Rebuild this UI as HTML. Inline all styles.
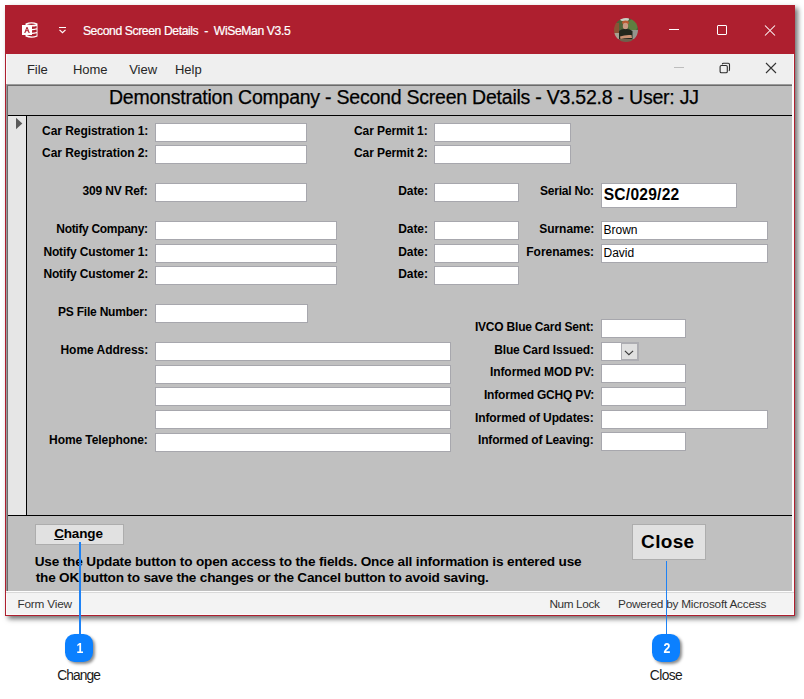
<!DOCTYPE html>
<html><head><meta charset="utf-8"><style>
html,body{margin:0;padding:0;}
body{width:804px;height:699px;background:#fff;position:relative;overflow:hidden;font-family:"Liberation Sans",sans-serif;}
.t{position:absolute;white-space:pre;}
.b{position:absolute;}
</style></head><body>
<div class="b" style="left:5px;top:5px;width:790px;height:611px;background:#ae1f2f;box-shadow:3px 3px 5px rgba(0,0,0,0.55);"></div>
<div class="b" style="left:6px;top:54px;width:788px;height:561px;background:#fbfbfb;"></div>
<div class="b" style="left:7px;top:54px;width:786px;height:30px;background:#efefef;"></div>
<div class="b" style="left:7px;top:591px;width:786px;height:23px;background:#f3f3f3;"></div>
<div class="b" style="left:6px;top:591px;width:788px;height:1px;background:#fdfdfd;"></div>
<div class="b" style="left:6px;top:592px;width:788px;height:1px;background:#d9d9d9;"></div>
<div class="b" style="left:6px;top:84px;width:786px;height:507px;background:#c0c0c0;"></div>
<div class="b" style="left:6px;top:84px;width:786px;height:1px;background:#9a9a9a;"></div>
<div class="b" style="left:6px;top:85px;width:786px;height:1px;background:#6a6a6a;"></div>
<div class="b" style="left:6px;top:84px;width:1px;height:507px;background:#9a9a9a;"></div>
<div class="b" style="left:7px;top:85px;width:1px;height:506px;background:#6a6a6a;"></div>
<div class="b" style="left:8px;top:115px;width:784px;height:1px;background:#000;"></div>
<div class="b" style="left:8px;top:116px;width:18px;height:399px;background:#e6e6e6;"></div>
<div class="b" style="left:26px;top:116px;width:1px;height:399px;background:#000;"></div>
<svg class="b" style="left:14px;top:117px" width="10" height="14"><path d="M2 0.8 L8.3 6.5 L2 12.2 Z" fill="#5a5a5a"/></svg>
<div class="b" style="left:8px;top:515px;width:784px;height:1px;background:#000;"></div>
<div class="t" style="left:82.9px;top:24.67px;font-size:12.2px;line-height:12.2px;font-weight:400;color:#fff;letter-spacing:-0.408px;-webkit-text-stroke:0.2px #fff;">Second Screen Details&nbsp; -&nbsp; WiSeMan V3.5</div>
<div class="t" style="left:26.9px;top:63.40px;font-size:13px;line-height:13px;font-weight:400;color:#262626;letter-spacing:0px;">File</div>
<div class="t" style="left:72.9px;top:63.40px;font-size:13px;line-height:13px;font-weight:400;color:#262626;letter-spacing:0px;">Home</div>
<div class="t" style="left:129.2px;top:63.40px;font-size:13px;line-height:13px;font-weight:400;color:#262626;letter-spacing:0px;">View</div>
<div class="t" style="left:174.89999999999998px;top:63.40px;font-size:13px;line-height:13px;font-weight:400;color:#262626;letter-spacing:0px;">Help</div>
<div class="t" style="left:109.0px;top:88.19px;font-size:19.5px;line-height:19.5px;font-weight:400;color:#000;letter-spacing:-0.228px;-webkit-text-stroke:0.25px #000;">Demonstration Company - Second Screen Details - V3.52.8 - User: JJ</div>
<div class="t" style="left:42.1px;top:124.84px;font-size:12px;line-height:12px;font-weight:700;color:#000;letter-spacing:-0.061px;">Car Registration 1:</div>
<div class="t" style="left:42.1px;top:146.84px;font-size:12px;line-height:12px;font-weight:700;color:#000;letter-spacing:-0.061px;">Car Registration 2:</div>
<div class="t" style="left:82.4px;top:184.84px;font-size:12px;line-height:12px;font-weight:700;color:#000;letter-spacing:-0.14px;">309 NV Ref:</div>
<div class="t" style="left:56.3px;top:222.84px;font-size:12px;line-height:12px;font-weight:700;color:#000;letter-spacing:-0.307px;">Notify Company:</div>
<div class="t" style="left:43.4px;top:245.84px;font-size:12px;line-height:12px;font-weight:700;color:#000;letter-spacing:-0.141px;">Notify Customer 1:</div>
<div class="t" style="left:43.4px;top:267.84px;font-size:12px;line-height:12px;font-weight:700;color:#000;letter-spacing:-0.141px;">Notify Customer 2:</div>
<div class="t" style="left:58.0px;top:305.84px;font-size:12px;line-height:12px;font-weight:700;color:#000;letter-spacing:-0.214px;">PS File Number:</div>
<div class="t" style="left:60.5px;top:343.84px;font-size:12px;line-height:12px;font-weight:700;color:#000;letter-spacing:-0.042px;">Home Address:</div>
<div class="t" style="left:49.1px;top:434.34px;font-size:12px;line-height:12px;font-weight:700;color:#000;letter-spacing:-0.079px;">Home Telephone:</div>
<div class="t" style="left:354.0px;top:124.84px;font-size:12px;line-height:12px;font-weight:700;color:#000;letter-spacing:-0.083px;">Car Permit 1:</div>
<div class="t" style="left:354.0px;top:146.84px;font-size:12px;line-height:12px;font-weight:700;color:#000;letter-spacing:-0.083px;">Car Permit 2:</div>
<div class="t" style="left:398.2px;top:184.84px;font-size:12px;line-height:12px;font-weight:700;color:#000;letter-spacing:-0.05px;">Date:</div>
<div class="t" style="left:398.2px;top:222.84px;font-size:12px;line-height:12px;font-weight:700;color:#000;letter-spacing:-0.05px;">Date:</div>
<div class="t" style="left:398.2px;top:245.84px;font-size:12px;line-height:12px;font-weight:700;color:#000;letter-spacing:-0.05px;">Date:</div>
<div class="t" style="left:398.2px;top:267.84px;font-size:12px;line-height:12px;font-weight:700;color:#000;letter-spacing:-0.05px;">Date:</div>
<div class="t" style="left:540.1px;top:184.84px;font-size:12px;line-height:12px;font-weight:700;color:#000;letter-spacing:-0.233px;">Serial No:</div>
<div class="t" style="left:539.2px;top:222.84px;font-size:12px;line-height:12px;font-weight:700;color:#000;letter-spacing:-0.029px;">Surname:</div>
<div class="t" style="left:526.3px;top:245.84px;font-size:12px;line-height:12px;font-weight:700;color:#000;letter-spacing:-0.033px;">Forenames:</div>
<div class="t" style="left:474.9px;top:320.84px;font-size:12px;line-height:12px;font-weight:700;color:#000;letter-spacing:-0.205px;">IVCO Blue Card Sent:</div>
<div class="t" style="left:494.2px;top:343.84px;font-size:12px;line-height:12px;font-weight:700;color:#000;letter-spacing:-0.137px;">Blue Card Issued:</div>
<div class="t" style="left:489.9px;top:365.84px;font-size:12px;line-height:12px;font-weight:700;color:#000;letter-spacing:-0.06px;">Informed MOD PV:</div>
<div class="t" style="left:483.9px;top:389.34px;font-size:12px;line-height:12px;font-weight:700;color:#000;letter-spacing:-0.181px;">Informed GCHQ PV:</div>
<div class="t" style="left:475.0px;top:411.84px;font-size:12px;line-height:12px;font-weight:700;color:#000;letter-spacing:-0.105px;">Informed of Updates:</div>
<div class="t" style="left:478.0px;top:433.84px;font-size:12px;line-height:12px;font-weight:700;color:#000;letter-spacing:-0.158px;">Informed of Leaving:</div>
<div class="b" style="left:155px;top:123px;width:152px;height:19px;background:#fff;box-shadow:inset 0 0 0 1px #a7a7ad;"></div>
<div class="b" style="left:155px;top:145px;width:152px;height:19px;background:#fff;box-shadow:inset 0 0 0 1px #a7a7ad;"></div>
<div class="b" style="left:434px;top:123px;width:137px;height:19px;background:#fff;box-shadow:inset 0 0 0 1px #a7a7ad;"></div>
<div class="b" style="left:434px;top:145px;width:137px;height:19px;background:#fff;box-shadow:inset 0 0 0 1px #a7a7ad;"></div>
<div class="b" style="left:155px;top:183px;width:152px;height:19px;background:#fff;box-shadow:inset 0 0 0 1px #a7a7ad;"></div>
<div class="b" style="left:434px;top:183px;width:85px;height:19px;background:#fff;box-shadow:inset 0 0 0 1px #a7a7ad;"></div>
<div class="b" style="left:601px;top:183px;width:136px;height:25px;background:#fff;box-shadow:inset 0 0 0 1px #a7a7ad;"></div>
<div class="b" style="left:155px;top:221px;width:182px;height:19px;background:#fff;box-shadow:inset 0 0 0 1px #a7a7ad;"></div>
<div class="b" style="left:434px;top:221px;width:85px;height:19px;background:#fff;box-shadow:inset 0 0 0 1px #a7a7ad;"></div>
<div class="b" style="left:601px;top:221px;width:167px;height:19px;background:#fff;box-shadow:inset 0 0 0 1px #a7a7ad;"></div>
<div class="b" style="left:155px;top:244px;width:182px;height:19px;background:#fff;box-shadow:inset 0 0 0 1px #a7a7ad;"></div>
<div class="b" style="left:434px;top:244px;width:85px;height:19px;background:#fff;box-shadow:inset 0 0 0 1px #a7a7ad;"></div>
<div class="b" style="left:601px;top:244px;width:167px;height:19px;background:#fff;box-shadow:inset 0 0 0 1px #a7a7ad;"></div>
<div class="b" style="left:155px;top:266px;width:182px;height:19px;background:#fff;box-shadow:inset 0 0 0 1px #a7a7ad;"></div>
<div class="b" style="left:434px;top:266px;width:85px;height:19px;background:#fff;box-shadow:inset 0 0 0 1px #a7a7ad;"></div>
<div class="b" style="left:155px;top:304px;width:153px;height:19px;background:#fff;box-shadow:inset 0 0 0 1px #a7a7ad;"></div>
<div class="b" style="left:601px;top:319px;width:85px;height:19px;background:#fff;box-shadow:inset 0 0 0 1px #a7a7ad;"></div>
<div class="b" style="left:155px;top:342px;width:296px;height:19px;background:#fff;box-shadow:inset 0 0 0 1px #a7a7ad;"></div>
<div class="b" style="left:155px;top:365px;width:296px;height:19px;background:#fff;box-shadow:inset 0 0 0 1px #a7a7ad;"></div>
<div class="b" style="left:155px;top:387px;width:296px;height:19px;background:#fff;box-shadow:inset 0 0 0 1px #a7a7ad;"></div>
<div class="b" style="left:155px;top:410px;width:296px;height:19px;background:#fff;box-shadow:inset 0 0 0 1px #a7a7ad;"></div>
<div class="b" style="left:155px;top:433px;width:296px;height:19px;background:#fff;box-shadow:inset 0 0 0 1px #a7a7ad;"></div>
<div class="b" style="left:601px;top:364px;width:85px;height:19px;background:#fff;box-shadow:inset 0 0 0 1px #a7a7ad;"></div>
<div class="b" style="left:601px;top:387px;width:85px;height:19px;background:#fff;box-shadow:inset 0 0 0 1px #a7a7ad;"></div>
<div class="b" style="left:601px;top:410px;width:167px;height:19px;background:#fff;box-shadow:inset 0 0 0 1px #a7a7ad;"></div>
<div class="b" style="left:601px;top:432px;width:85px;height:19px;background:#fff;box-shadow:inset 0 0 0 1px #a7a7ad;"></div>
<div class="b" style="left:601px;top:342px;width:22px;height:19px;background:#fff;box-shadow:inset 0 0 0 1px #a7a7ad;"></div>
<div class="b" style="left:621px;top:342px;width:18px;height:19px;background:#e0e0e0;box-shadow:inset 1px 0 0 #adadb2,inset -2px 0 0 #adadb2,inset 0 2px 0 #adadb2,inset 0 -2px 0 #adadb2;"></div>
<svg class="b" style="left:622px;top:347px" width="14" height="10" viewBox="0 0 14 10"><path d="M2.9 3.9 L6.9 7.7 L11.1 3.9" fill="none" stroke="#3a3a3a" stroke-width="1.15"/></svg>
<div class="t" style="left:603.7px;top:186.59px;font-size:15.6px;line-height:15.6px;font-weight:700;color:#000;letter-spacing:0.237px;">SC/029/22</div>
<div class="t" style="left:603.5px;top:223.94px;font-size:12px;line-height:12px;font-weight:400;color:#000;letter-spacing:0px;">Brown</div>
<div class="t" style="left:603.5px;top:246.84px;font-size:12px;line-height:12px;font-weight:400;color:#000;letter-spacing:0px;">David</div>
<div class="b" style="left:35px;top:524px;width:89px;height:21px;background:#e1e1e1;box-shadow:inset 0 0 0 1px #adadad;"></div>
<div class="t" style="left:54.2px;top:526.87px;font-size:13.5px;line-height:13.5px;font-weight:700;color:#000;letter-spacing:-0.16px;"><u>C</u>hange</div>
<div class="b" style="left:632px;top:524px;width:74px;height:36px;background:#e1e1e1;box-shadow:inset 0 0 0 1px #adadad;"></div>
<div class="t" style="left:641.1px;top:532.32px;font-size:19px;line-height:19px;font-weight:700;color:#000;letter-spacing:0.325px;">Close</div>
<div class="t" style="left:34.7px;top:554.59px;font-size:13.6px;line-height:13.6px;font-weight:700;color:#000;letter-spacing:-0.166px;">Use the Update button to open access to the fields. Once all information is entered use</div>
<div class="t" style="left:35.7px;top:570.59px;font-size:13.6px;line-height:13.6px;font-weight:700;color:#000;letter-spacing:-0.194px;">the OK button to save the changes or the Cancel button to avoid saving.</div>
<div class="t" style="left:17.4px;top:598.61px;font-size:11.8px;line-height:11.8px;font-weight:400;color:#333;letter-spacing:-0.187px;">Form View</div>
<div class="t" style="left:549.4px;top:598.61px;font-size:11.8px;line-height:11.8px;font-weight:400;color:#333;letter-spacing:-0.386px;">Num Lock</div>
<div class="t" style="left:618.1px;top:598.61px;font-size:11.8px;line-height:11.8px;font-weight:400;color:#333;letter-spacing:-0.223px;">Powered by Microsoft Access</div>
<div class="b" style="left:79.00px;top:542px;width:1.5px;height:94px;background:#1e82f5;"></div>
<div class="b" style="left:65.20px;top:634px;width:28px;height:28px;border-radius:9.5px;background:#0b80ff;box-shadow:2px 2px 3px rgba(0,0,0,0.45);"></div>
<div class="t" style="left:-120.1px;width:400px;text-align:center;top:641.35px;font-size:14px;line-height:14px;font-weight:700;color:#fff;letter-spacing:0px;transform:scaleX(0.88);">1</div>
<div class="t" style="left:57.2px;top:668.92px;font-size:13.8px;line-height:13.8px;font-weight:400;color:#1a1a1a;letter-spacing:-0.92px;">Change</div>
<div class="b" style="left:665.80px;top:561px;width:1.5px;height:75px;background:#1e82f5;"></div>
<div class="b" style="left:652.00px;top:634px;width:28px;height:28px;border-radius:9.5px;background:#0b80ff;box-shadow:2px 2px 3px rgba(0,0,0,0.45);"></div>
<div class="t" style="left:466.70000000000005px;width:400px;text-align:center;top:641.35px;font-size:14px;line-height:14px;font-weight:700;color:#fff;letter-spacing:0px;transform:scaleX(0.88);">2</div>
<div class="t" style="left:649.8px;top:668.92px;font-size:13.8px;line-height:13.8px;font-weight:400;color:#1a1a1a;letter-spacing:-0.575px;">Close</div>
<svg class="b" style="left:18px;top:18px" width="24" height="24" viewBox="0 0 24 24">
<path d="M7.5 5.6 Q13.5 3 19.5 5.6 L19.5 18.4 Q13.5 21 7.5 18.4 Z" fill="#fff"/>
<path d="M8.8 6.2 Q13.5 4.6 18.2 6.2 Q13.5 7.8 8.8 6.2 Z" fill="#ae1f2f"/>
<path d="M14 8.6 Q16.5 8.6 18.6 7.9 L18.6 10.3 Q16.5 11 14 11 Z" fill="#ae1f2f"/>
<path d="M14 12.2 Q16.5 12.2 18.6 11.5 L18.6 14 Q16.5 14.7 14 14.7 Z" fill="#ae1f2f"/>
<path d="M8.5 17.1 L14 17.1 L14 16 Q16.5 16 18.6 15.3 L18.6 17.6 Q13.5 19.8 8.5 17.1 Z" fill="#ae1f2f"/>
<rect x="4" y="7" width="10" height="10" fill="#fff"/>
<path d="M6.2 15 L8.5 9 L9.5 9 L11.8 15 L10.6 15 L10 13.3 L8 13.3 L7.4 15 Z M8.3 12.3 L9.7 12.3 L9 10.4 Z" fill="#ae1f2f"/>
</svg>
<svg class="b" style="left:56px;top:24px" width="14" height="12" viewBox="0 0 14 12"><rect x="3" y="3" width="7" height="1" fill="#fff"/><path d="M3.5 5.9 L6.5 8.6 L9.5 5.9" fill="none" stroke="#fff" stroke-width="1.2"/></svg>
<svg class="b" style="left:614px;top:18px" width="24" height="24" viewBox="0 0 24 24">
<defs><clipPath id="cc"><circle cx="12" cy="12" r="12"/></clipPath>
<filter id="bl" x="-10%" y="-10%" width="120%" height="120%"><feGaussianBlur stdDeviation="0.55"/></filter></defs>
<g clip-path="url(#cc)"><g filter="url(#bl)">
<rect x="-2" y="-2" width="28" height="28" fill="#4f6438"/>
<ellipse cx="10.5" cy="1" rx="4.5" ry="2.2" fill="#c8d0c4"/>
<ellipse cx="19" cy="7" rx="5" ry="6" fill="#5f7e40"/>
<rect x="-1" y="5" width="6" height="10" fill="#8a5234"/>
<rect x="17" y="12" width="8" height="11" fill="#94948c"/>
<rect x="-1" y="15" width="8" height="9" fill="#a8a090"/>
<ellipse cx="11.5" cy="4.6" rx="3.4" ry="2.2" fill="#b85a30"/>
<ellipse cx="11.5" cy="8" rx="2.7" ry="3.3" fill="#c99a82"/>
<path d="M5 13 Q8 10.6 11.5 11.2 Q15 10.6 18.5 13 L18.5 22 L5 22 Z" fill="#22261f"/>
<path d="M6 18.5 Q11 16.5 17.5 17 L18 20 Q12 19.5 6.5 21 Z" fill="#c99072"/>
<rect x="-1" y="21" width="26" height="4" fill="#6e604c"/>
</g></g></svg>
<div class="b" style="left:669px;top:29px;width:10px;height:1px;background:#fff;"></div>
<div class="b" style="left:717px;top:25px;width:8px;height:8px;border:1px solid #fff;border-radius:1px;"></div>
<svg class="b" style="left:764px;top:25px" width="12" height="11" viewBox="0 0 12 11"><path d="M1 0.5 L11 10.5 M11 0.5 L1 10.5" stroke="#fff" stroke-width="1.05"/></svg>
<div class="b" style="left:674px;top:67px;width:10px;height:1px;background:#bdbdbd;"></div>
<svg class="b" style="left:718px;top:61px" width="14" height="14" viewBox="0 0 14 14"><path d="M4.2 3.3 Q4.5 2.3 5.5 2.3 L10.2 2.3 Q11.5 2.3 11.5 3.6 L11.5 8.4 Q11.5 9.4 10.8 9.7" fill="none" stroke="#2b2b2b" stroke-width="1.1"/><rect x="2.1" y="4.5" width="7.2" height="7.3" rx="1.3" fill="none" stroke="#2b2b2b" stroke-width="1.1"/></svg>
<svg class="b" style="left:765px;top:62px" width="12" height="12" viewBox="0 0 12 12"><path d="M1 1 L11 11 M11 1 L1 11" stroke="#333" stroke-width="1.1"/></svg>
</body></html>
